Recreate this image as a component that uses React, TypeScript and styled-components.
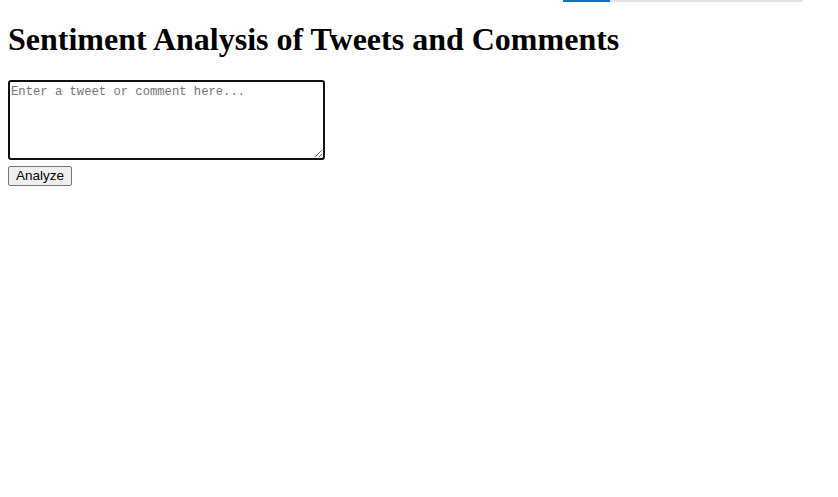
import React from "react";
import styled, { createGlobalStyle } from "styled-components";

const Global = createGlobalStyle`
  html, body { margin: 0; padding: 0; background: #fff; }
  body { padding: 0 8px 8px; font-family: "Liberation Serif", "Times New Roman", serif; }
`;

const Progress = styled.div`
  position: fixed;
  top: 0;
  left: 563px;
  width: 240px;
  height: 2px;
  background: #e3e3e3;
  display: flex;
`;

const ProgressFill = styled.div`
  height: 100%;
  background: #1a6fc0;
`;

const Title = styled.h1`
  font-family: "Liberation Serif", "Times New Roman", serif;
  font-size: 32px;
  font-weight: bold;
  margin: 21.44px 0;
  padding-top: 0;
  color: #000;
`;

const Page = styled.div`
  display: flow-root;
`;

const Form = styled.div`
  display: flex;
  flex-direction: column;
  align-items: flex-start;
  gap: 6px;
`;

const TextArea = styled.textarea`
  box-sizing: border-box;
  width: 317px;
  height: 80px;
  padding: 3px 1px;
  border: 2px solid #101010;
  border-radius: 3px;
  font-family: "Liberation Mono", "Courier New", monospace;
  font-size: 12.2px;
  outline: none;
  resize: both;
  &::placeholder { color: #757575; }
`;

const Button = styled.button`
  box-sizing: border-box;
  height: 20px;
  padding: 0 7px;
  font-family: "Liberation Sans", Arial, sans-serif;
  font-size: 13.5px;
  color: #000;
  background: #efefef;
  border: 1px solid #767676;
  border-radius: 2px;
`;

export default function App() {
  return (
    <Page>
      <Global />
      <Progress>
        <ProgressFill style={{ width: "47px" }} />
      </Progress>
      <Title>Sentiment Analysis of Tweets and Comments</Title>
      <Form>
        <TextArea placeholder="Enter a tweet or comment here..." />
        <Button>Analyze</Button>
      </Form>
    </Page>
  );
}
